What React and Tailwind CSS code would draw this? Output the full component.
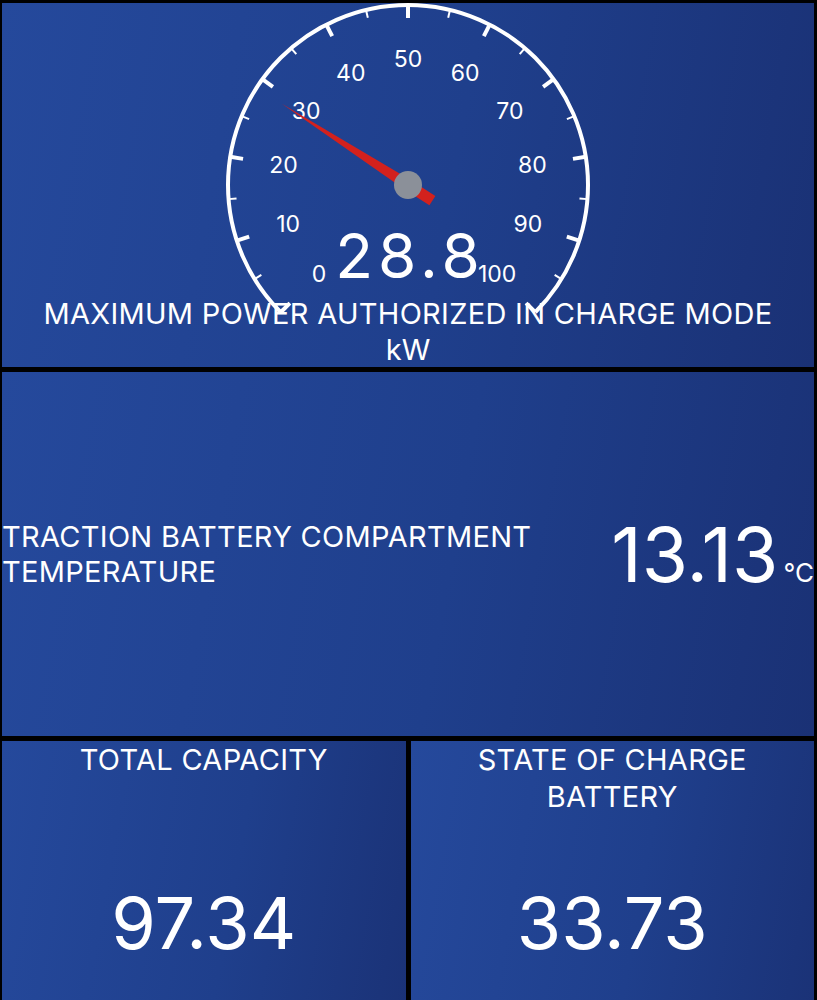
const panel =
  'bg-[linear-gradient(100deg,#25499c_0%,#1f3f8c_55%,#1a3175_100%)] text-white';

const GAUGE = { cx: 190, cy: 182, r: 180, min: 0, max: 100, value: 28.8 };

function angleFor(v) {
  return -135 + ((v - GAUGE.min) / (GAUGE.max - GAUGE.min)) * 270;
}

function polar(r, deg) {
  const rad = (deg * Math.PI) / 180;
  return [GAUGE.cx + r * Math.sin(rad), GAUGE.cy - r * Math.cos(rad)];
}

function Gauge() {
  const { cx, cy, r, value } = GAUGE;
  const [sx, sy] = polar(r, -135);
  const [ex, ey] = polar(r, 135);
  const ticks = [];
  for (let i = 0; i <= 20; i++) {
    const a = -135 + i * 13.5;
    const major = i % 2 === 0;
    const [x1, y1] = polar(r, a);
    const [x2, y2] = polar(major ? r - 13 : r - 8, a);
    ticks.push(
      <line
        key={i}
        x1={x1}
        y1={y1}
        x2={x2}
        y2={y2}
        stroke="white"
        strokeWidth={major ? 4 : 2}
      />
    );
  }
  const labels = [];
  for (let v = 0; v <= 100; v += 10) {
    const [x, y] = polar(126, angleFor(v));
    labels.push(
      <text
        key={v}
        x={x}
        y={y}
        fill="white"
        fontSize="23"
        textAnchor="middle"
        dominantBaseline="central"
      >
        {v}
      </text>
    );
  }

  return (
    <svg
      width="380"
      height="293"
      viewBox="0 0 380 293"
      className="mx-auto block overflow-visible"
      style={{ fontFamily: 'Inter, "Noto Sans", sans-serif' }}
    >
      <path
        d={`M ${sx} ${sy} A ${r} ${r} 0 1 1 ${ex} ${ey}`}
        fill="none"
        stroke="white"
        strokeWidth="4"
      />
      {ticks}
      {labels}
      <text
        x={cx + 2}
        y="275"
        fill="white"
        fontSize="62"
        letterSpacing="5"
        textAnchor="middle"
      >
        {value}
      </text>
      <g transform={`rotate(${angleFor(value)} ${cx} ${cy})`}>
        <polygon
          points={`${cx},${cy - 150} ${cx + 5.5},${cy} ${cx + 5.5},${cy + 29} ${cx - 5.5},${cy + 29} ${cx - 5.5},${cy}`}
          fill="#d3211d"
        />
      </g>
      <circle cx={cx} cy={cy} r="14" fill="#8b9099" />
    </svg>
  );
}

export default function App() {
  return (
    <div className="flex flex-col gap-[5px] bg-black pt-[3px] pr-[3px] pl-[2px] font-['Inter','Noto_Sans',sans-serif]">
      <section className={`${panel} h-[364px] overflow-hidden`}>
        <Gauge />
        <h2 className="text-center text-[29px] leading-[36px] font-normal tracking-[0.3px]">
          MAXIMUM POWER AUTHORIZED IN CHARGE MODE
        </h2>
        <p className="text-center text-[29px] leading-[36px]">kW</p>
      </section>

      <section className={`${panel} flex h-[364px] items-center justify-between`}>
        <h2 className="max-w-[580px] text-[29px] leading-[35px] font-normal tracking-[0.3px]">
          TRACTION BATTERY COMPARTMENT TEMPERATURE
        </h2>
        <div className="flex items-baseline">
          <span className="text-[75px] leading-none">13.13</span>
          <span className="ml-[5px] text-[26px] leading-none">°C</span>
        </div>
      </section>

      <div className="grid grid-cols-2 gap-[5px]">
        <section className={`${panel} grid h-[364px]`}>
          <h2 className="col-start-1 row-start-1 self-start text-center text-[29px] leading-[37px] font-normal tracking-[0.3px]">
            TOTAL CAPACITY
          </h2>
          <div className="col-start-1 row-start-1 self-center text-center text-[72px] leading-none">
            97.34
          </div>
        </section>
        <section className={`${panel} grid h-[364px]`}>
          <h2 className="col-start-1 row-start-1 self-start px-16 text-center text-[29px] leading-[37px] font-normal tracking-[0.3px]">
            STATE OF CHARGE BATTERY
          </h2>
          <div className="col-start-1 row-start-1 self-center text-center text-[72px] leading-none">
            33.73
          </div>
        </section>
      </div>
    </div>
  );
}
